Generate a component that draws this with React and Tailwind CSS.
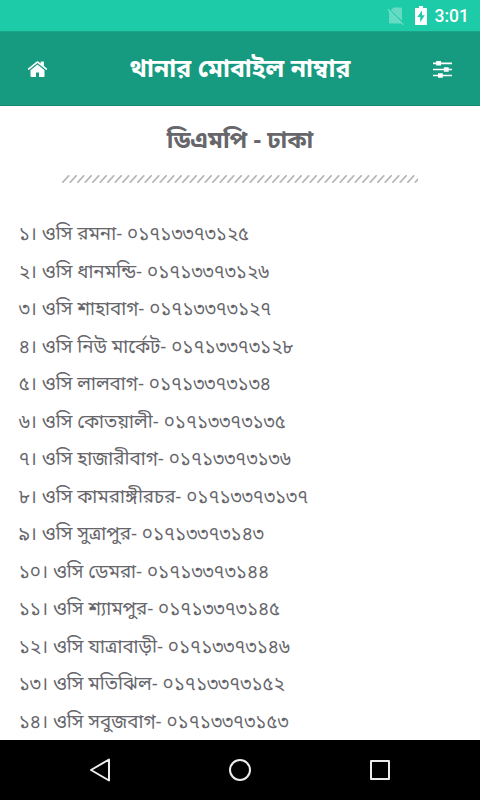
const rows = [
  "১। ওসি রমনা- ০১৭১৩৩৭৩১২৫",
  "২। ওসি ধানমন্ডি- ০১৭১৩৩৭৩১২৬",
  "৩। ওসি শাহাবাগ- ০১৭১৩৩৭৩১২৭",
  "৪। ওসি নিউ মার্কেট- ০১৭১৩৩৭৩১২৮",
  "৫। ওসি লালবাগ- ০১৭১৩৩৭৩১৩৪",
  "৬। ওসি কোতয়ালী- ০১৭১৩৩৭৩১৩৫",
  "৭। ওসি হাজারীবাগ- ০১৭১৩৩৭৩১৩৬",
  "৮। ওসি কামরাঙ্গীরচর- ০১৭১৩৩৭৩১৩৭",
  "৯। ওসি সুত্রাপুর- ০১৭১৩৩৭৩১৪৩",
  "১০। ওসি ডেমরা- ০১৭১৩৩৭৩১৪৪",
  "১১। ওসি শ্যামপুর- ০১৭১৩৩৭৩১৪৫",
  "১২। ওসি যাত্রাবাড়ী- ০১৭১৩৩৭৩১৪৬",
  "১৩। ওসি মতিঝিল- ০১৭১৩৩৭৩১৫২",
  "১৪। ওসি সবুজবাগ- ০১৭১৩৩৭৩১৫৩",
];

function StatusBar() {
  return (
    <div className="flex h-[31px] shrink-0 items-center justify-end bg-[#1ecba9] pr-[11px] text-white">
      <svg className="mr-[10px]" width="18" height="18" viewBox="0 0 18 18">
        <path d="M6.500 .5H14q1 0 1 1v12.300L3.800 3.300zM2 4.200L14.300 16.500H3q-1 0-1-1z" fill="#fff" fillOpacity="0.32" />
        <path d="M.8 2.200l15.500 15.500" stroke="#fff" strokeOpacity="0.35" strokeWidth="1.300" />
      </svg>
      <svg className="mr-[8px]" width="12" height="19" viewBox="0 0 12 19">
        <path d="M4 0h4v2h3.500l.5.500v16l-.5.500H.5l-.5-.5v-16L.5 2H4z" fill="#fff" />
        <path d="M7 4.500L2.300 11H5.200v5.300L9.800 9.300H7z" fill="#1ecba9" />
      </svg>
      <span className="pt-0.5 font-[Roboto,sans-serif] text-[17.500px] font-medium">3:01</span>
    </div>
  );
}

function Header() {
  return (
    <header className="flex h-[75px] shrink-0 items-center justify-between border-t border-b border-t-[#1aa589] border-b-[#148a71] bg-[#179b80] px-7">
      <svg className="mt-0.5" width="20" height="17" viewBox="0 0 20 17" fill="#fff">
        <path d="M9.500 3.400L2.500 9.200v6q0 .8.800.8H8v-4.600h3V16h4.700q.8 0 .8-.8v-6z" />
        <path d="M8.700.5q.8-.6 1.600 0L12.700 2.500V.6h3.200v4.500L19 7.600v.9l-.8.6L9.500 2 .8 9.100 0 8.500v-.9z" />
      </svg>
      <h1 className="-mt-px text-[24.750px] leading-8 font-bold text-white">থানার মোবাইল নাম্বার</h1>
      <svg width="20" height="19" viewBox="0 0 20 19">
        <path d="M1 4.300h19M1 10.500h19M1 16.500h19" stroke="#fff" strokeWidth="1.700" />
        <path d="M4.200 2h4.800v4.600H4.200zM11.900 8.200h4.800v4.600h-4.800zM6 14.200h4.800v4.600H6z" fill="#fff" />
      </svg>
    </header>
  );
}

function Divider() {
  return (
    <svg className="mx-auto mt-[19px] shrink-0" width="356" height="8" viewBox="0 0 356 8">
      <defs>
        <pattern id="hatch" width="7.500" height="8" patternUnits="userSpaceOnUse">
          <path d="M.3 7.700L7.200.3" stroke="#a8a8a8" strokeWidth="1.500" />
        </pattern>
      </defs>
      <rect width="356" height="8" fill="url(#hatch)" />
    </svg>
  );
}

function NavBar() {
  return (
    <nav className="flex h-[60px] shrink-0 items-center justify-between bg-black px-[89px]">
      <svg width="22" height="24" viewBox="0 0 22 24">
        <path d="M20 1.500v21L2 12z" fill="none" stroke="#ececec" strokeWidth="2" strokeLinejoin="round" />
      </svg>
      <span className="mr-px size-[22px] rounded-full border-2 border-[#ececec]" />
      <span className="mr-px size-5 rounded-[1px] border-2 border-[#ececec]" />
    </nav>
  );
}

export default function App() {
  return (
    <div className="flex h-[800px] w-[480px] flex-col overflow-hidden bg-white font-['Noto_Sans','Noto_Sans_Bengali',sans-serif] text-[#66666b]">
      <StatusBar />
      <Header />
      <main className="flex min-h-0 flex-1 flex-col overflow-hidden">
        <h2 className="mt-4 shrink-0 text-center text-[23.800px] leading-[34px] font-bold">ডিএমপি - ঢাকা</h2>
        <Divider />
        <ul className="mt-[31px] px-[18.750px]">
          {rows.map((r) => (
            <li key={r} className="h-[37.500px] whitespace-nowrap text-[18.750px] leading-[37.500px]">{r}</li>
          ))}
        </ul>
      </main>
      <NavBar />
    </div>
  );
}
